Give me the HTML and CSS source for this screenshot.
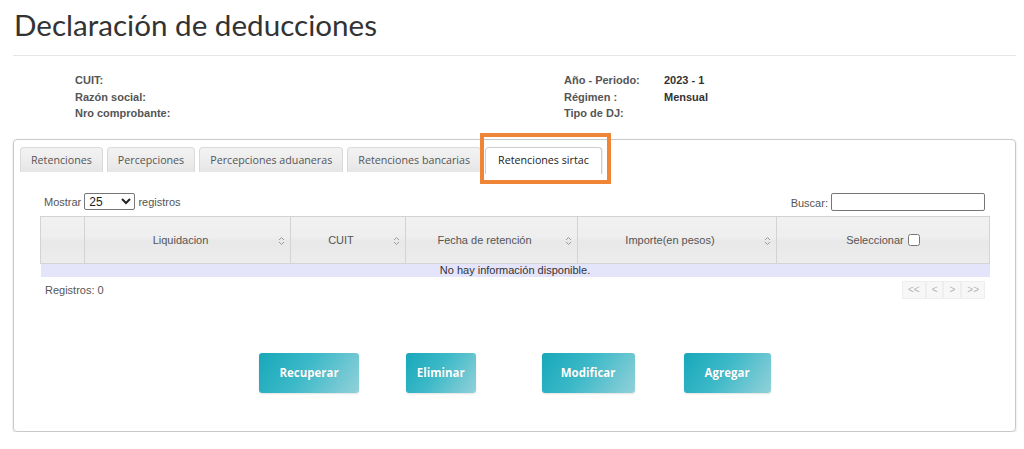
FILE: index.html
```html
<!DOCTYPE html>
<html lang="es">
<head>
    <meta charset="UTF-8">
    <meta name="viewport" content="width=device-width, initial-scale=1.0">
    <title>Declaración de deducciones</title>
    <link rel="stylesheet" href="styles.css">
</head>
<body>

    <div class="page">
        <h1 class="title">Declaración de deducciones</h1>

        <div class="info">
            <div class="info-left">
                <p class="label">CUIT:</p>
                <p class="label">Razón social:</p>
                <p class="label">Nro comprobante:</p>
            </div>
            <div class="info-right">
                <p class="label">Año - Periodo:</p><p class="value">2023 - 1</p>
                <p class="label">Régimen :</p><p class="value">Mensual</p>
                <p class="label">Tipo de DJ:</p><p class="value"></p>
            </div>
        </div>

        <div class="panel">
            <ul class="tabs">
                <li class="tab">Retenciones</li>
                <li class="tab">Percepciones</li>
                <li class="tab">Percepciones aduaneras</li>
                <li class="tab">Retenciones bancarias</li>
                <li class="tab active">Retenciones sirtac<span class="highlight"></span></li>
            </ul>

            <div class="tab-content">
                <div class="controls">
                    <label class="length">Mostrar
                        <select class="select">
                            <option>25</option>
                            <option>50</option>
                            <option>100</option>
                        </select>
                        registros</label>
                    <label class="search">Buscar: <input type="text" class="search-input"></label>
                </div>

                <table class="grid">
                    <colgroup>
                        <col class="col-first">
                        <col class="col-liq">
                        <col class="col-cuit">
                        <col class="col-fecha">
                        <col class="col-importe">
                        <col>
                    </colgroup>
                    <thead>
                        <tr>
                            <th></th>
                            <th class="sortable">Liquidacion <svg class="sort" viewBox="0 0 7 10"><path d="M1 4 L3.5 1.5 L6 4 M1 6 L3.5 8.5 L6 6" /></svg></th>
                            <th class="sortable">CUIT <svg class="sort" viewBox="0 0 7 10"><path d="M1 4 L3.5 1.5 L6 4 M1 6 L3.5 8.5 L6 6" /></svg></th>
                            <th class="sortable">Fecha de retención <svg class="sort" viewBox="0 0 7 10"><path d="M1 4 L3.5 1.5 L6 4 M1 6 L3.5 8.5 L6 6" /></svg></th>
                            <th class="sortable">Importe(en pesos) <svg class="sort" viewBox="0 0 7 10"><path d="M1 4 L3.5 1.5 L6 4 M1 6 L3.5 8.5 L6 6" /></svg></th>
                            <th class="col-sel">Seleccionar <input type="checkbox" class="check"></th>
                        </tr>
                    </thead>
                    <tbody>
                        <tr class="empty">
                            <td colspan="6">No hay información disponible.</td>
                        </tr>
                    </tbody>
                </table>

                <div class="footer">
                    <span class="count">Registros: 0</span>
                    <div class="pager">
                        <span class="page-btn">&lt;&lt;</span>
                        <span class="page-btn">&lt;</span>
                        <span class="page-btn">&gt;</span>
                        <span class="page-btn">&gt;&gt;</span>
                    </div>
                </div>

                <div class="actions">
                    <button class="btn">Recuperar</button>
                    <button class="btn btn-eliminar">Eliminar</button>
                    <button class="btn btn-modificar">Modificar</button>
                    <button class="btn btn-agregar">Agregar</button>
                </div>
            </div>
        </div>
    </div>

</body>
</html>
```

FILE: styles.css
```css
body {
    margin: 0;
    font-family: "Liberation Sans", Arial, sans-serif;
    font-size: 11px;
    color: #333;
    background: white;
}
p {
    margin: 0;
}
.page {
    padding: 0 8px 0 13px;
}
.title {
    font-family: Lato, "Open Sans", sans-serif;
    font-weight: normal;
    font-size: 29.6px;
    line-height: 36px;
    color: #333;
    margin: 0;
    padding: 7px 0 12px 1px;
    border-bottom: 1px solid #e6e6e6;
}
.info {
    display: flex;
    margin-top: 16px;
    padding-left: 62px;
    line-height: 16.5px;
    font-weight: bold;
}
.info-left {
    width: 489px;
}
.info-right {
    display: grid;
    grid-template-columns: 100px auto;
}
.label {
    color: #555;
}
.value {
    color: #333;
}
.panel {
    position: relative;
    margin-top: 17px;
    height: 291px;
    border: 1px solid #c9c9c9;
    border-radius: 4px;
    box-shadow: 0 1px 2px rgba(0, 0, 0, 0.18);
}
.tabs {
    display: flex;
    gap: 4px;
    list-style: none;
    margin: 0;
    padding: 7px 6px 0;
}
.tab {
    position: relative;
    height: 24px;
    line-height: 24px;
    padding: 0 10px;
    font-family: "Open Sans", sans-serif;
    font-size: 10.7px;
    color: #555;
    background: linear-gradient(#f3f3f3, #e6e6e6);
    border: 1px solid #dadada;
    border-bottom: none;
    border-radius: 4px 4px 0 0;
}
.tab.active {
    background: white;
    color: #222;
    height: 26px;
    padding: 0 12px;
    border-color: #cfcfcf;
    box-shadow: 1px 0 1px rgba(0, 0, 0, 0.08);
}
.highlight {
    position: absolute;
    left: -6px;
    top: -15px;
    right: -10px;
    bottom: -10px;
    border: 4px solid #ef8637;
    pointer-events: none;
}
.tab-content {
    padding: 18px 25px 0 26px;
}
.controls {
    display: flex;
    justify-content: space-between;
    align-items: center;
    height: 20px;
    margin-bottom: 4px;
    color: #555;
}
.length {
    padding-left: 4px;
}
.select {
    width: 51px;
    height: 17px;
    padding: 0;
    font-family: "Liberation Sans", Arial, sans-serif;
    font-size: 12px;
    border: 1px solid #767676;
    border-radius: 2px;
    background: white;
    color: #222;
}
.search-input {
    width: 148px;
    height: 14px;
    border: 1px solid #767676;
    border-radius: 2px;
    margin: 0 5px 0 0;
}
.grid {
    width: 100%;
    table-layout: fixed;
    border-collapse: collapse;
}
.col-first { width: 44px; }
.col-liq { width: 206px; }
.col-cuit { width: 115px; }
.col-fecha { width: 172px; }
.col-importe { width: 199px; }
.grid th {
    position: relative;
    height: 46px;
    padding: 0 18px 0 4px;
    font-weight: normal;
    color: #555;
    border: 1px solid #d3d3d3;
    background: linear-gradient(#f1f1f1 0%, #eeeeee 48%, #e8e8e8 52%, #ececec 100%);
}
.grid th.col-sel {
    padding: 0 4px;
}
.sort {
    position: absolute;
    right: 5px;
    top: 19px;
    width: 7px;
    height: 10px;
    fill: none;
    stroke: #9a9a9a;
    stroke-width: 1;
}
.check {
    width: 12px;
    height: 12px;
    margin: 0 0 0 1px;
    vertical-align: -2px;
}
.empty td {
    height: 13px;
    padding: 0;
    line-height: 13px;
    text-align: center;
    background: #e4e4fb;
    color: #333;
}
.footer {
    display: flex;
    justify-content: space-between;
    align-items: center;
    height: 18px;
    margin-top: 4px;
    color: #555;
}
.count {
    padding-left: 5px;
}
.pager {
    display: flex;
    margin-right: 5px;
}
.page-btn {
    padding: 0 5px;
    height: 16px;
    line-height: 16px;
    font-size: 10px;
    color: #b5b5b5;
    background: #f7f7f7;
    border: 1px solid #eeeeee;
}
.actions {
    display: flex;
    justify-content: center;
    margin-top: 54px;
}
.btn {
    height: 40px;
    padding: 0 20px;
    font-family: "Open Sans", sans-serif;
    font-weight: bold;
    font-size: 11.5px;
    color: white;
    border: none;
    border-radius: 3px;
    background: linear-gradient(125deg, #17a8ba 0%, #3db9c8 45%, #92d1d9 100%);
    box-shadow: 0 1px 2px rgba(0, 0, 0, 0.12);
    text-shadow: 0 0 1px rgba(0, 0, 0, 0.15);
    cursor: pointer;
}
.btn:hover {
    background: #17a8ba;
}
.btn-eliminar {
    margin-left: 47px;
    padding: 0 11px;
}
.btn-modificar {
    margin-left: 66px;
    padding: 0 19px;
}
.btn-agregar {
    margin-left: 49px;
    padding: 0 21px;
}
```
